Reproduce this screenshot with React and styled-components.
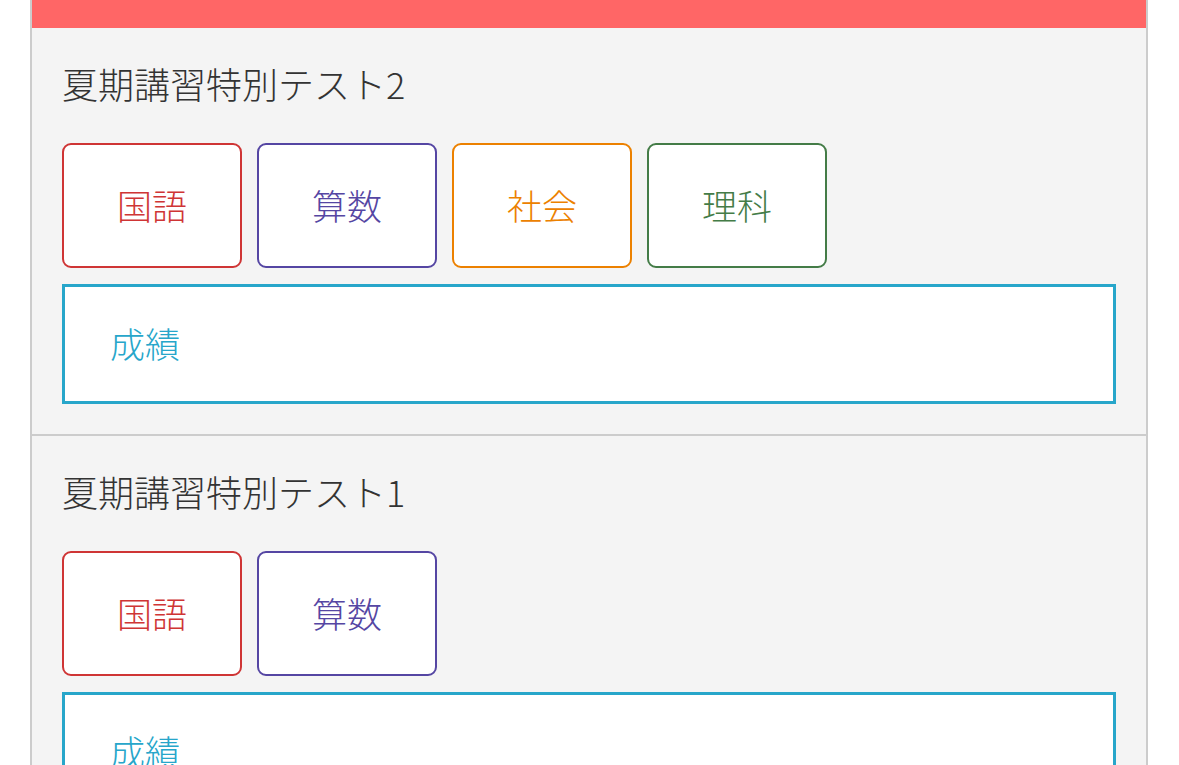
import React from "react";
import styled, { createGlobalStyle } from "styled-components";

const GlobalStyle = createGlobalStyle`
  html, body {
    margin: 0;
    padding: 0;
    background: #ffffff;
    font-family: "Noto Sans CJK JP", "Noto Sans", sans-serif;
  }
`;

const tests = [
  { id: 2, name: "夏期講習特別テスト2", subjects: ["国語", "算数", "社会", "理科"] },
  { id: 1, name: "夏期講習特別テスト1", subjects: ["国語", "算数"] },
];

const subjectColors = {
  国語: "#cf3535",
  算数: "#5546a3",
  社会: "#ec8100",
  理科: "#447c47",
};

export default function App() {
  return (
    <>
      <GlobalStyle />
      <Page>
        <Header />
        {tests.map((test) => (
          <Section key={test.id}>
            <Title>{test.name}</Title>
            <SubjectRow>
              {test.subjects.map((s) => (
                <SubjectButton key={s} color={subjectColors[s]}>
                  {s}
                </SubjectButton>
              ))}
            </SubjectRow>
            <ResultBox>成績</ResultBox>
          </Section>
        ))}
      </Page>
    </>
  );
}

const Page = styled.div`
  margin-left: 30px;
  width: 1114px;
  min-height: 765px;
  background: #f4f4f4;
  border-left: 2px solid #cccccc;
  border-right: 2px solid #cccccc;
`;

const Header = styled.div`
  height: 28px;
  background: #ff6666;
`;

const Section = styled.div`
  padding: 28px 30px 30px;
  & + & {
    border-top: 2px solid #cccccc;
  }
`;

const Title = styled.div`
  font-size: 36px;
  font-weight: 300;
  line-height: 54px;
  color: #333333;
  margin-bottom: 33px;
`;

const SubjectRow = styled.div`
  display: flex;
  gap: 15px;
  margin-bottom: 16px;
`;

const SubjectButton = styled.div`
  box-sizing: border-box;
  width: 180px;
  height: 125px;
  display: flex;
  align-items: center;
  justify-content: center;
  background: #ffffff;
  border: 2.5px solid ${(p) => p.color};
  border-radius: 9px;
  color: ${(p) => p.color};
  font-size: 35px;
  font-weight: 300;
  padding-bottom: 2px;
`;

const ResultBox = styled.div`
  box-sizing: border-box;
  height: 120px;
  display: flex;
  align-items: center;
  padding-left: 45px;
  background: #ffffff;
  border: 3px solid #27a6ca;
  color: #27a6ca;
  font-size: 35px;
  font-weight: 300;
  padding-bottom: 4px;
`;
